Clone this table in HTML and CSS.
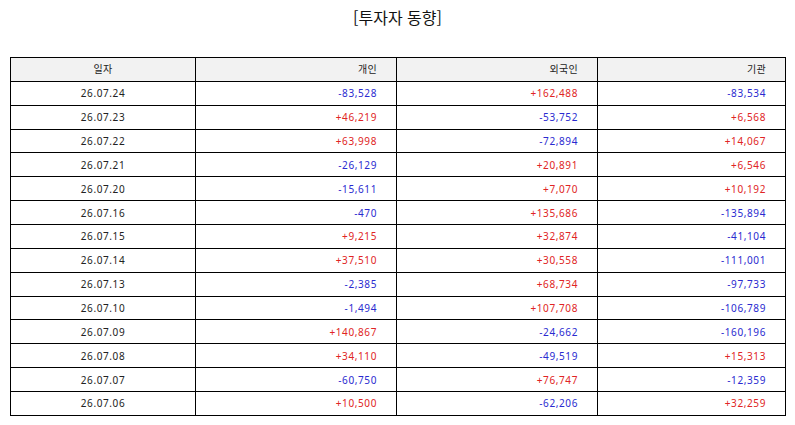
FILE: index.html
```html
<!DOCTYPE html>
<html lang="ko">
<head>
<meta charset="utf-8">
<link rel="stylesheet" href="styles.css">
</head>
<body>
<div class="page">
  <h1 class="title">[투자자 동향]</h1>
  <table class="grid">
    <colgroup>
      <col class="c-date"><col class="c-num"><col class="c-num"><col class="c-last">
    </colgroup>
    <thead>
      <tr><th class="date">일자</th><th>개인</th><th>외국인</th><th>기관</th></tr>
    </thead>
    <tbody>
      <tr><td class="date">26.07.24</td><td class="dn">-83,528</td><td class="up">+162,488</td><td class="dn">-83,534</td></tr>
      <tr><td class="date">26.07.23</td><td class="up">+46,219</td><td class="dn">-53,752</td><td class="up">+6,568</td></tr>
      <tr><td class="date">26.07.22</td><td class="up">+63,998</td><td class="dn">-72,894</td><td class="up">+14,067</td></tr>
      <tr><td class="date">26.07.21</td><td class="dn">-26,129</td><td class="up">+20,891</td><td class="up">+6,546</td></tr>
      <tr><td class="date">26.07.20</td><td class="dn">-15,611</td><td class="up">+7,070</td><td class="up">+10,192</td></tr>
      <tr><td class="date">26.07.16</td><td class="dn">-470</td><td class="up">+135,686</td><td class="dn">-135,894</td></tr>
      <tr><td class="date">26.07.15</td><td class="up">+9,215</td><td class="up">+32,874</td><td class="dn">-41,104</td></tr>
      <tr><td class="date">26.07.14</td><td class="up">+37,510</td><td class="up">+30,558</td><td class="dn">-111,001</td></tr>
      <tr><td class="date">26.07.13</td><td class="dn">-2,385</td><td class="up">+68,734</td><td class="dn">-97,733</td></tr>
      <tr><td class="date">26.07.10</td><td class="dn">-1,494</td><td class="up">+107,708</td><td class="dn">-106,789</td></tr>
      <tr><td class="date">26.07.09</td><td class="up">+140,867</td><td class="dn">-24,662</td><td class="dn">-160,196</td></tr>
      <tr><td class="date">26.07.08</td><td class="up">+34,110</td><td class="dn">-49,519</td><td class="up">+15,313</td></tr>
      <tr><td class="date">26.07.07</td><td class="dn">-60,750</td><td class="up">+76,747</td><td class="dn">-12,359</td></tr>
      <tr><td class="date">26.07.06</td><td class="up">+10,500</td><td class="dn">-62,206</td><td class="up">+32,259</td></tr>
    </tbody>
  </table>
</div>
</body>
</html>
```
FILE: styles.css
```css
html, body {
  margin: 0;
  padding: 0;
  background: #ffffff;
}
.page {
  padding: 5px 10px 0 10px;
  font-family: "Noto Sans", "Noto Sans CJK KR", sans-serif;
  color: #222222;
}
.title {
  margin: 0;
  height: 52px;
  font-family: "Noto Sans CJK KR", "Noto Sans", sans-serif;
  font-size: 16px;
  font-weight: normal;
  text-align: center;
  line-height: 25px;
  color: #111111;
}
.grid {
  width: 775px;
  border-collapse: collapse;
  table-layout: fixed;
  font-size: 10px;
  letter-spacing: 0.6px;
}
.c-date { width: 185px; }
.c-num { width: 201px; }
.c-last { width: 188px; }
.grid th, .grid td {
  border: 1.3px solid #000000;
  height: 22.87px;
  padding: 0 19px 0 4px;
  text-align: right;
  font-weight: normal;
  line-height: 12px;
  white-space: nowrap;
}
.grid th {
  background: #f2f2f2;
  color: #222222;
  font-family: "Noto Sans CJK KR", "Noto Sans", sans-serif;
  letter-spacing: 0.3px;
}
.grid th.date, .grid td.date {
  text-align: center;
  padding: 0;
}
.up { color: #e02424; }
.dn { color: #2a2ad0; }
.grid td.date { color: #222222; }
```
